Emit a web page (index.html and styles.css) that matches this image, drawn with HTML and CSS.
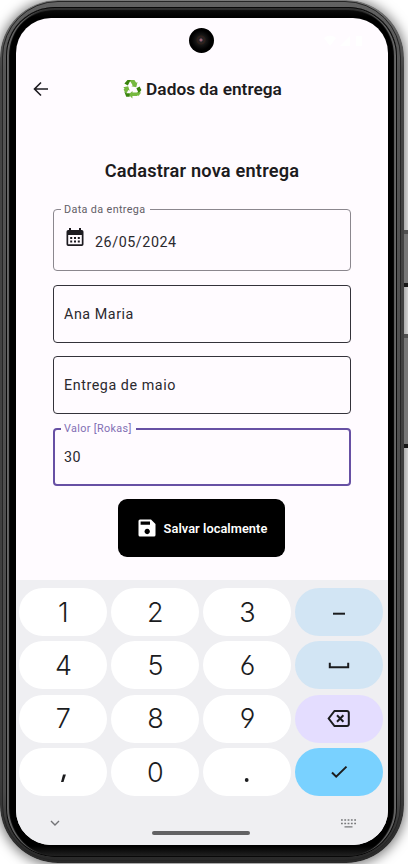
FILE: index.html
```html
<!DOCTYPE html>
<html lang="pt-BR">
<head>
<meta charset="utf-8">
<title>Dados da entrega</title>
<link rel="stylesheet" href="styles.css">
</head>
<body>
<div class="side-button power"></div>
<div class="side-button volume"></div>
<div class="phone">
  <div class="rim">
  <div class="bezel">
    <main class="screen">
      <div class="camera"></div>
      <svg class="status" viewBox="0 0 40 14" fill="#fff"><path d="M0 4q6-5 12 0l-6 8zM16 12L26 2v10zM32 2h6v10h-6z"/></svg>
      <header class="appbar">
        <svg class="back" viewBox="0 0 16 16"><path d="M15 8H1.5M8 1.5 1.5 8 8 14.5"/></svg>
        <h1>
          <svg class="recycle" viewBox="0 0 20 20">
            <path fill="#76b83f" d="M6.2 1.1h6.2l1.8 2.6 1.3-.7-1.2 5.2-5-.9 1.4-.9-2-3.4zM1.2 8.200l5-1 1.5 4.600-1.400-.7-2 3.600-2.700-4 .9-1.400zM10.400 19.500l-3.900-4 4-3.500v1.600h4.100l3-1.300-2.200 4.800h-5z"/>
            <path fill="#39830d" d="M5.500 1.100h3.200L5.800 6.600 2.400 4.600zM14.400 9.200l3.200-1.800 1.800 3.500-2.600 3.500zM2.200 12.200l2.200 2.100h3.300v3.400H4.200z"/>
            <path fill="#76b83f" d="m15.500 14.500 2.600-2 .6 1.500-2.200 3.300z"/>
          </svg>
          <span>Dados da entrega</span>
        </h1>
      </header>
      <section class="form">
        <h2>Cadastrar nova entrega</h2>
        <div class="field date">
          <span class="label">Data da entrega</span>
          <svg class="calendar" viewBox="0 0 18 20"><path fill="#1d1b20" fill-rule="evenodd" d="M3 1h2v2h8V1h2v2h.8A1.7 1.7 0 0 1 17.500 4.700V17.300A1.700 1.700 0 0 1 15.800 19H2.200A1.700 1.700 0 0 1 .5 17.300V4.700A1.700 1.700 0 0 1 2.200 3H3zM2.200 8v9.300h13.600V8z"/><path fill="#1d1b20" d="M4.200 10h2v2h-2zm3.800 0h2v2H8zm3.800 0h2v2h-2zm-7.600 3.500h2v2h-2zm3.800 0h2v2H8zm3.800 0h2v2h-2z"/></svg>
          <span class="value">26/05/2024</span>
        </div>
        <div class="field"><span class="value">Ana Maria</span></div>
        <div class="field"><span class="value">Entrega de maio</span></div>
        <div class="field focused"><span class="label">Valor [Rokas]</span><span class="value">30</span></div>
        <button class="save">
          <svg viewBox="0 0 18 18"><path fill="#fff" fill-rule="evenodd" d="M2 .5h11L17.500 5v11A1.500 1.500 0 0 1 16 17.500H2A1.500 1.500 0 0 1 .5 16V2A1.500 1.500 0 0 1 2 .5zM2.600 2.600v3.200H12V2.600zM9.200 9.800a2.700 2.700 0 1 0 .01 0z"/></svg>
          <span>Salvar localmente</span>
        </button>
      </section>
      <section class="keyboard">
        <div class="keys">
          <div class="key">1</div><div class="key">2</div><div class="key">3</div>
          <div class="key blue"><svg viewBox="0 0 24 24"><path d="M6 13.700h12"/></svg></div>
          <div class="key">4</div><div class="key">5</div><div class="key">6</div>
          <div class="key blue"><svg viewBox="0 0 24 24"><path d="M2.800 9.800v4.500h18.400V9.800"/></svg></div>
          <div class="key">7</div><div class="key">8</div><div class="key">9</div>
          <div class="key lilac"><svg viewBox="0 0 24 24"><path d="M7.500 4H20a1.800 1.800 0 0 1 1.800 1.800v11.400a1.800 1.800 0 0 1-1.800 1.800H7.500L1.700 11.500zM10 8.300l6.400 6.400M16.400 8.300 10 14.700"/></svg></div>
          <div class="key"><svg viewBox="0 0 24 24"><path class="solid" d="M12 14.600h2.900l-2.400 7.400H10z"/></svg></div><div class="key">0</div>
          <div class="key"><svg viewBox="0 0 24 24"><circle class="solid" cx="11.700" cy="20" r="1.900"/></svg></div>
          <div class="key enter"><svg viewBox="0 0 24 24"><path d="m5 12.500 4.200 4.200L19.500 6.600"/></svg></div>
        </div>
        <div class="navbar">
          <svg class="chevron" viewBox="0 0 10 6"><path d="m1 1 4 4 4-4"/></svg>
          <div class="handle"></div>
          <svg class="switcher" viewBox="0 0 15 9"><path d="M0 1h15M0 4.500h15" stroke-dasharray="1.800 1.500"/><path d="M3.500 7.900h8"/></svg>
        </div>
      </section>
    </main>
  </div>
  </div>
</div>
</body>
</html>
```
FILE: styles.css
```css
* { box-sizing: border-box; }
body {
  margin: 0;
  width: 408px;
  height: 864px;
  overflow: hidden;
  position: relative;
  background: #fff;
  font-family: Roboto, sans-serif;
  color: #1d1b20;
}
.phone {
  width: 404px;
  height: 863px;
  padding: 1px 3px 2px 2px;
  border-radius: 58px;
  background: linear-gradient(#777, #454545 8%, #3c3c3c 90%, #292929);
  box-shadow: 0 1px 12px 2px rgba(0, 0, 0, .5);
}
.rim {
  height: 860px;
  padding: 5px 3px 3px;
  border-radius: 56px;
  background: linear-gradient(#626262, #555 8%, #4a4a4a 92%, #292929);
  border: 1px solid #252525;
}
.bezel {
  height: 850px;
  padding: 11px 8px 12px 10px;
  border-radius: 49px;
  background: linear-gradient(#111, #000 1.200%, #000 98.700%, #242424);
  box-shadow: inset 0 0 0 1px #080808, inset 3px 0 1px #686868, inset -3px 0 1px #686868, inset 0 3px 1px #303030;
}
.screen {
  position: relative;
  display: flex;
  flex-direction: column;
  width: 372px;
  height: 827px;
  border-radius: 35px;
  overflow: hidden;
  background: #fffbff;
}
.side-button {
  position: absolute;
  left: 404px;
  width: 4px;
  background: #777;
  border-top: 4px solid #505050;
  border-bottom: 4px solid #171717;
  z-index: 1;
}
.power { top: 230px; height: 57px; }
.volume { top: 334px; height: 114px; }
.camera {
  position: absolute;
  left: 173px;
  top: 10px;
  width: 25px;
  height: 25px;
  border-radius: 50%;
  background: radial-gradient(circle at 48% 48%, #9b6270 0 1px, #24262c 2px, #302018 4px, #171717 5px, #080808 8px, #000 10px);
}
.status { position: absolute; left: 308px; top: 16px; width: 40px; height: 14px; }
.appbar {
  display: grid;
  grid-template-columns: 42px 1fr 42px;
  align-items: center;
  height: 58px;
  margin-top: 41.500px;
}
.back { width: 16px; height: 16px; margin-left: 17px; fill: none; stroke: #1d1b20; stroke-width: 1.6; }
h1, h2 { margin: 0; white-space: nowrap; }
h1 {
  display: flex;
  justify-content: center;
  align-items: center;
  gap: 4px;
  font-size: 17.300px;
  font-weight: 600;
  line-height: 22px;
}
.recycle { width: 20px; height: 20px; }
.form { display: flex; flex-direction: column; align-items: center; padding: 0 37px; height: 462px; }
h2 {
  margin-top: 41px;
  font-size: 18.200px;
  line-height: 24px;
  font-weight: 600;
  letter-spacing: .2px;
}
.field {
  position: relative;
  display: flex;
  align-items: center;
  align-self: flex-start;
  width: 297.500px;
  height: 58px;
  flex: none;
  margin-bottom: 13.500px;
  padding-left: 10px;
  border: 1px solid #34323a;
  border-radius: 4px;
  font-size: 14.300px;
  letter-spacing: .56px;
}
.date { height: 62.500px; margin-top: 26px; border-color: #8b878e; padding-left: 12px; }
.date .value { margin: 5px 0 0 11px; }
.date .calendar { margin-top: -6px; }
.calendar { width: 18px; height: 20px; }
.focused { border: 2px solid #6750a4; padding-left: 9px; }
.value { color: #2b292e; }
.label {
  position: absolute;
  left: 7px;
  top: -7px;
  padding: 0 4px 0 3px;
  background: #fffbff;
  color: #625e66;
  font-size: 10.800px;
  line-height: 14px;
  letter-spacing: .36px;
}
.focused .label { left: 6px; top: -8px; color: #826fb4; }
.save {
  display: flex;
  align-items: center;
  justify-content: center;
  gap: 8px;
  width: 167px;
  height: 58px;
  flex: none;
  margin-right: 1px;
  padding: 0 0 0 2px;
  border: 0;
  border-radius: 9px;
  background: #000;
  color: #fff;
  font: 600 12.800px Roboto, sans-serif;
  letter-spacing: .06px;
}
.save svg { width: 18px; height: 18px; }
.keyboard { flex: 1; padding: 8.500px 4px 0; background: #efeff2; }
.keys { display: grid; grid-template-columns: repeat(4, 88px); grid-auto-rows: 48px; gap: 5.400px 4px; margin-left: -.6px; }
.key {
  display: flex;
  align-items: center;
  justify-content: center;
  border-radius: 24px;
  background: #fff;
  font: 350 27px Inter, sans-serif;
  font-feature-settings: "cv03", "cv04";
  color: #1b1c1e;
}
.key svg { width: 24px; height: 24px; fill: none; stroke: #1b1c1e; stroke-width: 2; }
.key .solid { fill: #1b1c1e; stroke: none; }
.blue { background: #d2e5f4; }
.lilac { background: #e4ddff; }
.enter { background: #79d1ff; }
.navbar { display: flex; align-items: flex-start; justify-content: space-between; padding: 24px 28px 0 30px; }
.chevron { width: 10px; height: 6px; fill: none; stroke: #737477; stroke-width: 1.4; }
.handle { width: 98px; height: 4px; margin: 11px 0 0; border-radius: 2px; background: #626264; }
.switcher { width: 15px; height: 9px; margin-top: -1px; fill: none; stroke: #77787a; stroke-width: 1.3; }
```
